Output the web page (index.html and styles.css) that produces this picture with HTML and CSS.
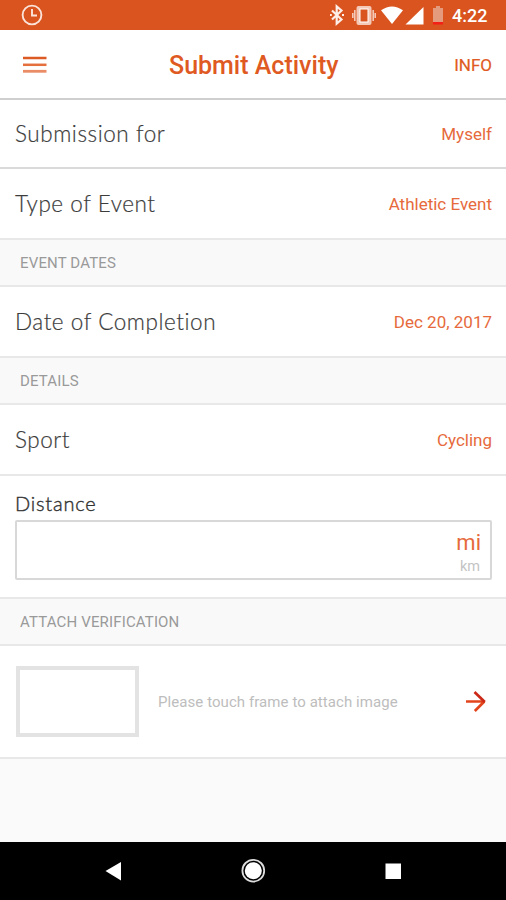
FILE: index.html
```html
<!DOCTYPE html>
<html lang="en">
<head>
<meta charset="utf-8">
<title>Submit Activity</title>
<link rel="stylesheet" href="styles.css">
</head>
<body>
<div class="status">
  <svg class="status-clock" width="22" height="22" viewBox="0 0 22 22" fill="none" stroke="#fbe3da" stroke-width="1.9"><circle cx="11" cy="11" r="9.4"/><path d="M11 5v6.500h5"/></svg>
  <svg class="status-icons" width="122" height="30" viewBox="0 0 122 30">
    <path d="M5 10.500l9.500 9-4.800 4.200V6.300l4.800 4.200-9.500 9" fill="none" stroke="#fdeee8" stroke-width="2.200"/>
    <path d="M3 15h1.800M15 15h2" stroke="#fdeee8" stroke-width="2.200"/>
    <rect x="29.500" y="6" width="15" height="19" rx="2" fill="#f5c9b8"/>
    <rect x="33" y="9" width="8" height="13" fill="#d9541e" stroke="#fff" stroke-width="1"/>
    <path d="M27.800 10v11M46.200 10v11M25.800 13v5M48.200 13v5" stroke="#f5c9b8" stroke-width="1.600"/>
    <path d="M54 10.300Q65 2.500 76 10.300L65 24z" fill="#fff"/>
    <path d="M96.500 7v17.500H78.500z" fill="#fff"/>
    <path d="M106 8h3V6h4v2h3v14h-10z" fill="#e39a7d"/>
    <path d="M106 22h10v2.500h-10z" fill="#f41f16"/>
  </svg>
  <span class="time">4:22</span>
</div>
<header class="bar">
  <svg class="menu" width="24" height="18" viewBox="0 0 24 18"><path d="M0 2h23.500" stroke="#dc5a24" stroke-width="2.500"/><path d="M0 8.800h23.500" stroke="#e56f3d" stroke-width="2.500"/><path d="M0 15.300h23.500" stroke="#ea8c66" stroke-width="2.800"/></svg>
  <h1 class="title">Submit Activity</h1>
  <span class="info">INFO</span>
</header>
<main class="content">
  <div class="row row-first"><span class="label">Submission for</span><span class="value">Myself</span></div>
  <div class="row"><span class="label">Type of Event</span><span class="value">Athletic Event</span></div>
  <div class="section">EVENT DATES</div>
  <div class="row"><span class="label">Date of Completion</span><span class="value">Dec 20, 2017</span></div>
  <div class="section">DETAILS</div>
  <div class="row"><span class="label">Sport</span><span class="value">Cycling</span></div>
  <div class="distance">
    <div class="distance-label">Distance</div>
    <div class="field"><span class="mi">mi</span><span class="km">km</span></div>
  </div>
  <div class="section">ATTACH VERIFICATION</div>
  <div class="attach">
    <div class="frame"></div>
    <span class="hint">Please touch frame to attach image</span>
    <svg class="arrow" width="22" height="22" viewBox="0 0 22 22" fill="none" stroke-width="2.700"><path d="M1 10.500h18M9.800 20L19.300 10.500" stroke="#e2451c"/><path d="M9.500 1L19.800 11" stroke="#cb2817"/></svg>
  </div>
</main>
<nav class="nav">
  <svg width="506" height="58" viewBox="0 0 506 58" fill="#fff"><path d="M105.500 29L121 20v18.500z"/><circle cx="253.300" cy="28.700" r="8.500"/><circle cx="253.300" cy="28.700" r="10.900" fill="none" stroke="#ddd" stroke-width="1.800"/><rect x="385.500" y="21.500" width="15.500" height="15.500"/></svg>
</nav>
</body>
</html>
```

FILE: styles.css
```css
* { box-sizing: border-box; }
body {
  margin: 0;
  width: 506px;
  height: 900px;
  overflow: hidden;
  display: flex;
  flex-direction: column;
  background: #fafafa;
  font-family: Roboto, sans-serif;
  color: #3c3c3c;
}
svg { display: block; flex: none; }
.status {
  height: 30px;
  flex: none;
  display: flex;
  align-items: center;
  background: #d9541e;
  color: #fff;
}
.status-clock { margin-left: 21px; }
.status-icons { margin-left: 284px; }
.time { margin: 2px 0 0 3px; font-size: 18px; font-weight: 500; line-height: 28px; }
.bar {
  height: 70px;
  flex: none;
  display: flex;
  align-items: center;
  padding: 0 14px 0 23px;
  background: #fff;
  border-bottom: 2px solid #cfcfcf;
  color: #df5a22;
}
.menu { margin-top: 2px; }
.title { margin: 4px 0 0 122px; font-size: 25px; font-weight: 500; line-height: 30px; white-space: nowrap; }
.info { margin: 1px 0 0 auto; font-size: 17px; line-height: 22px; -webkit-text-stroke: 0.200px; }
.content { flex: 1; }
.row {
  height: 71px;
  display: flex;
  align-items: center;
  justify-content: space-between;
  padding: 0 14px 0 15px;
  background: #fff;
  border-bottom: 2px solid #e8e8e8;
}
.row-first { height: 69px; border-bottom-color: #dadada; }
.label {
  margin-top: 1px;
  font-family: Lato, sans-serif;
  font-size: 22.500px;
  font-weight: 300;
  line-height: 28px;
  letter-spacing: 0.550px;
  font-variant-ligatures: none;
  -webkit-text-stroke: 0.200px;
  white-space: nowrap;
}
.value { font-size: 17px; line-height: 22px; color: #e66a3c; white-space: nowrap; }
.section {
  height: 47px;
  display: flex;
  align-items: center;
  padding: 1px 0 0 20px;
  background: #f9f9f9;
  border-bottom: 2px solid #e8e8e8;
  font-size: 15px;
  letter-spacing: 0.150px;
  color: #9a9a9a;
}
.distance { height: 123px; padding: 14px 14px 0 15px; background: #fff; border-bottom: 2px solid #e8e8e8; }
.distance-label {
  height: 30px;
  font-family: Lato, sans-serif;
  font-size: 20px;
  font-weight: 300;
  line-height: 26px;
  letter-spacing: 0.800px;
  -webkit-text-stroke: 0.400px;
  color: #333;
}
.field {
  height: 60px;
  display: flex;
  flex-direction: column;
  align-items: flex-end;
  padding: 8px 9px 0 0;
  border: 2px solid #d8d8d8;
  border-radius: 2px;
}
.mi { font-size: 22px; line-height: 26px; color: #e66a3c; }
.km { margin-right: 1px; font-size: 14.500px; line-height: 21px; color: #c4c4c4; }
.attach { height: 113px; display: flex; align-items: center; padding: 0 19px 0 16px; background: #fff; border-bottom: 2px solid #e8e8e8; }
.frame { width: 123px; height: 71px; border: 4px solid #e3e3e3; }
.hint { margin-left: 19px; font-size: 15px; line-height: 20px; letter-spacing: 0.070px; color: #bdbdbd; white-space: nowrap; }
.arrow { margin-left: auto; }
.nav { height: 58px; flex: none; background: #000; }
```
